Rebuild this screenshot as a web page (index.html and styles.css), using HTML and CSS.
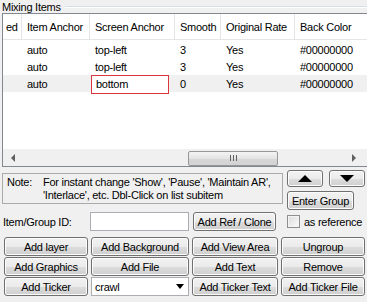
FILE: index.html
```html
<!DOCTYPE html>
<html lang="en">
<head>
  <meta charset="UTF-8" />
  <title>Mixing Items</title>
  <link rel="stylesheet" href="styles.css">
</head>
<body>

  <div class="legend-row">
    <span class="legend">Mixing Items</span>
    <span class="rule"></span>
  </div>

  <div class="list">
    <div class="grid head">
      <div class="cell">ed</div>
      <div class="cell">Item Anchor</div>
      <div class="cell">Screen Anchor</div>
      <div class="cell">Smooth</div>
      <div class="cell">Original Rate</div>
      <div class="cell">Back Color</div>
    </div>
    <div class="rows">
      <div class="grid row">
        <div class="cell"></div>
        <div class="cell">auto</div>
        <div class="cell">top-left</div>
        <div class="cell">3</div>
        <div class="cell">Yes</div>
        <div class="cell">#00000000</div>
      </div>
      <div class="grid row">
        <div class="cell"></div>
        <div class="cell">auto</div>
        <div class="cell">top-left</div>
        <div class="cell">3</div>
        <div class="cell">Yes</div>
        <div class="cell">#00000000</div>
      </div>
      <div class="grid row selected">
        <div class="cell"></div>
        <div class="cell">auto</div>
        <div class="cell editing">bottom</div>
        <div class="cell">0</div>
        <div class="cell">Yes</div>
        <div class="cell">#00000000</div>
      </div>
    </div>
    <div class="hscroll">
      <span class="arrow-left"></span>
      <div class="track">
        <div class="thumb"><span class="grip"></span></div>
      </div>
      <span class="arrow-right"></span>
    </div>
  </div>

  <div class="note-row">
    <div class="note">
      <span class="note-label">Note:</span>
      <span class="note-text">For instant change 'Show', 'Pause', 'Maintain AR',<br>'Interlace', etc. Dbl-Click on list subitem</span>
    </div>
    <div class="side">
      <div class="arrows">
        <button class="btn small"><span class="tri-up"></span></button>
        <button class="btn small"><span class="tri-down"></span></button>
      </div>
      <button class="btn enter">Enter Group</button>
    </div>
  </div>

  <div class="id-row">
    <label class="id-label">Item/Group ID:</label>
    <input class="id-input" type="text">
    <button class="btn ref">Add Ref / Clone</button>
    <span class="check"></span>
    <span class="check-label">as reference</span>
  </div>

  <div class="buttons">
    <button class="btn">Add layer</button>
    <button class="btn">Add Background</button>
    <button class="btn">Add View Area</button>
    <button class="btn">Ungroup</button>
    <button class="btn">Add Graphics</button>
    <button class="btn">Add File</button>
    <button class="btn">Add Text</button>
    <button class="btn">Remove</button>
    <button class="btn">Add Ticker</button>
    <div class="combo"><span>crawl</span><span class="tri-down combo-arrow"></span></div>
    <button class="btn">Add Ticker Text</button>
    <button class="btn">Add Ticker File</button>
  </div>

</body>
</html>
```

FILE: styles.css
```css
* {
  box-sizing: border-box;
}
body {
  margin: 0;
  width: 367px;
  height: 302px;
  overflow: hidden;
  background: #f0f0f0;
  font-family: 'Liberation Sans', Arial, sans-serif;
  font-size: 11px;
  letter-spacing: -0.25px;
  color: #000;
}

/* group title */
.legend-row {
  display: flex;
  align-items: center;
  height: 13px;
  padding-left: 2px;
}
.legend {
  padding-right: 4px;
}
.rule {
  flex: 1;
  border-top: 1px solid #d5dfe5;
  border-bottom: 1px solid #fff;
  margin-top: 1px;
}

/* list view */
.list {
  margin-left: 2px;
  width: 372px;
  height: 154px;
  background: #fff;
  border: 1px solid #828790;
  display: flex;
  flex-direction: column;
  overflow: hidden;
}
.grid {
  display: grid;
  grid-template-columns: 19px 68px 85px 46px 74px 80px;
  white-space: nowrap;
}
.head {
  height: 26px;
  align-items: center;
}
.head .cell {
  height: 100%;
  display: flex;
  align-items: center;
  border-right: 1px solid #e5e5e5;
  border-bottom: 1px solid #e5e5e5;
}
.head .cell:first-child {
  padding-left: 3px;
}
.cell {
  padding-left: 5px;
}
.rows {
  flex: 1;
  padding-top: 1px;
}
.row {
  height: 17px;
  align-items: center;
}
.row .cell {
  height: 100%;
  display: flex;
  align-items: center;
}
.selected {
  background: #f0f0f0;
}
.editing {
  border: 1px solid #d9363e;
  background: #fff;
  margin: -1px 6px -2px 1px;
  height: 19px !important;
  padding-left: 4px;
}

/* horizontal scrollbar */
.hscroll {
  height: 17px;
  background: #f0f0f0;
  display: flex;
  align-items: center;
  border-top: 1px solid #f0f0f0;
}
.arrow-left {
  width: 0;
  height: 0;
  margin: 0 0 0 8px;
  border-top: 4px solid transparent;
  border-bottom: 4px solid transparent;
  border-right: 4px solid #606060;
}
.track {
  flex: 1;
  display: flex;
  padding-left: 173px;
}
.thumb {
  width: 90px;
  height: 15px;
  border: 1px solid #979797;
  border-radius: 2px;
  background: linear-gradient(#f3f3f3, #e4e4e4 50%, #d7d7d7 51%, #d3d3d3);
  display: flex;
  justify-content: center;
  align-items: center;
}
.grip {
  width: 7px;
  height: 6px;
  background: repeating-linear-gradient(90deg, #606060 0 1px, transparent 1px 3px);
}
.arrow-right {
  width: 0;
  height: 0;
  margin-right: 17px;
  margin-left: 73px;
  border-top: 4px solid transparent;
  border-bottom: 4px solid transparent;
  border-left: 4px solid #606060;
}

/* note + side buttons */
.note-row {
  display: flex;
  padding: 3px 0 0 2px;
  gap: 4px;
}
.note {
  width: 281px;
  height: 31px;
  margin-top: 3px;
  border: 1px solid #aaa;
  background: #f0f0f0;
  display: flex;
  padding: 2px 0 0 4px;
  line-height: 13px;
  overflow: hidden;
}
.note-label {
  width: 36px;
  flex: none;
}
.note-text {
  white-space: nowrap;
}
.side {
  display: flex;
  flex-direction: column;
  gap: 4px;
}
.arrows {
  display: flex;
  gap: 6px;
}
.btn {
  font-family: inherit;
  font-size: 11px;
  letter-spacing: -0.25px;
  color: #000;
  border: 1px solid #707070;
  border-radius: 3px;
  background: linear-gradient(#f2f2f2, #ebebeb 50%, #dddddd 51%, #cfcfcf);
  box-shadow: inset 0 0 0 1px #fcfcfc;
  padding: 0;
  height: 19px;
  white-space: nowrap;
}
.small {
  width: 36px;
  height: 17px;
  display: flex;
  align-items: center;
  justify-content: center;
}
.enter {
  width: 67px;
  height: 19px;
}
.tri-up {
  width: 0;
  height: 0;
  border-left: 7px solid transparent;
  border-right: 7px solid transparent;
  border-bottom: 7px solid #000;
}
.tri-down {
  width: 0;
  height: 0;
  border-left: 7px solid transparent;
  border-right: 7px solid transparent;
  border-top: 7px solid #000;
}

/* id row */
.id-row {
  display: flex;
  align-items: center;
  height: 19px;
  margin-top: 2px;
  padding-left: 3px;
}
.id-label {
  width: 87px;
}
.id-input {
  width: 99px;
  height: 19px;
  border: 1px solid #abadb3;
  background: #fff;
  margin-right: 4px;
}
.ref {
  width: 83px;
}
.check {
  width: 13px;
  height: 13px;
  margin-left: 11px;
  border: 1px solid #8f8f8f;
  background: linear-gradient(135deg, #dcdcdc, #fbfbfb);
  box-shadow: inset 0 0 0 1px #f4f4f4;
}
.check-label {
  margin-left: 4px;
}

/* button grid */
.buttons {
  display: grid;
  grid-template-columns: 84px 98px 86px 84px;
  grid-auto-rows: 19px;
  column-gap: 3px;
  row-gap: 1px;
  padding: 6px 0 0 4px;
}
.combo {
  background: #fff;
  border: 1px solid #abadb3;
  display: flex;
  align-items: center;
  justify-content: space-between;
  padding: 0 4px 0 3px;
}
.combo-arrow {
  border-left-width: 4px;
  border-right-width: 4px;
  border-top-width: 5px;
}
```
